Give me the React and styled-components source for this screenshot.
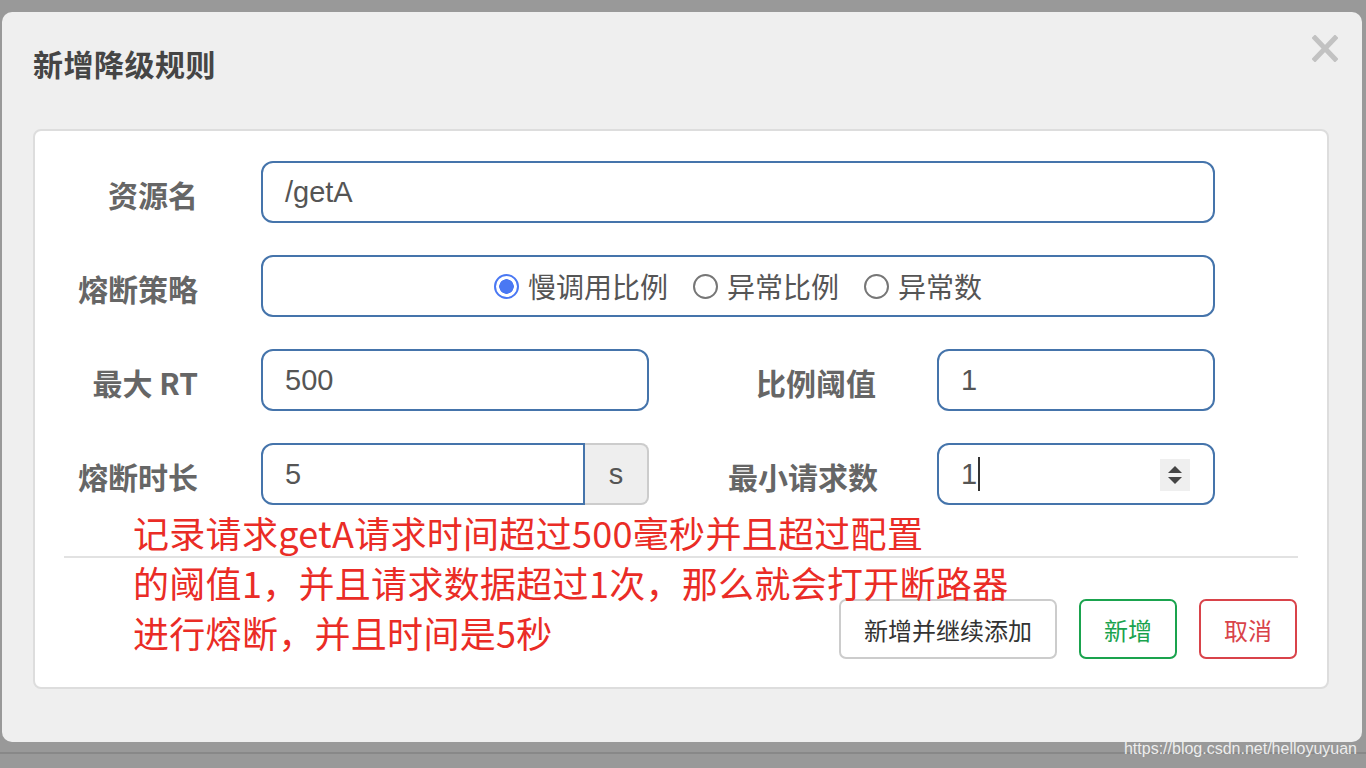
import React from "react";
import styled, { createGlobalStyle } from "styled-components";

const GlobalStyle = createGlobalStyle`
    html, body {
        margin: 0;
        padding: 0;
        background: #999999;
        font-family: "Liberation Sans", "Noto Sans CJK SC", sans-serif;
    }
`;

const CJK = `"Noto Sans CJK SC", "Liberation Sans", sans-serif`;
const LATIN = `"Liberation Sans", "Noto Sans CJK SC", sans-serif`;

function Radio({ checked, children }) {
    return (
        <Option>
            <RadioDot $checked={checked} />
            <span>{children}</span>
        </Option>
    );
}

function Spinner() {
    return (
        <SpinBox>
            <svg width="18" height="22" viewBox="0 0 18 22">
                <path d="M9 2 L16 9 L2 9 Z" fill="#444" />
                <path d="M2 13 L16 13 L9 20 Z" fill="#444" />
            </svg>
        </SpinBox>
    );
}

export default function App() {
    return (
        <Page>
            <GlobalStyle />
            <Modal>
                <Header>
                    <Title>新增降级规则</Title>
                    <Close aria-label="close">
                        <svg width="26" height="27" viewBox="0 0 26 27">
                            <path
                                d="M3 3 L23 24 M23 3 L3 24"
                                stroke="#c2c2c2"
                                strokeWidth="5"
                                strokeLinecap="square"
                            />
                        </svg>
                    </Close>
                </Header>

                <Panel>
                    <Form>
                        <Row>
                            <Label>资源名</Label>
                            <Field>/getA</Field>
                        </Row>
                        <Row>
                            <Label>熔断策略</Label>
                            <Field $center>
                                <Radio checked>慢调用比例</Radio>
                                <Radio>异常比例</Radio>
                                <Radio>异常数</Radio>
                            </Field>
                        </Row>
                        <Row>
                            <Label>最大 RT</Label>
                            <Field $width={388}>500</Field>
                            <Label $width={227} $gap={61}>比例阈值</Label>
                            <Field $width={278}>1</Field>
                        </Row>
                        <Row>
                            <Label>熔断时长</Label>
                            <Group>
                                <Field $width={324} $flatRight>5</Field>
                                <Addon>s</Addon>
                            </Group>
                            <Label $width={229} $gap={59}>最小请求数</Label>
                            <Field $width={278}>
                                1<Caret />
                                <Spinner />
                            </Field>
                        </Row>
                    </Form>

                    <Divider />

                    <Footer>
                        <Button $width={218}>新增并继续添加</Button>
                        <Button $width={98} $variant="success">新增</Button>
                        <Button $width={98} $variant="danger">取消</Button>
                    </Footer>

                    {/* annotation drawn on top of the dialog */}
                    <Note>
                        记录请求getA请求时间超过500毫秒并且超过配置
                        <br />
                        的阈值1，并且请求数据超过1次，那么就会打开断路器
                        <br />
                        进行熔断，并且时间是5秒
                    </Note>
                </Panel>
            </Modal>
            <Watermark>https://blog.csdn.net/helloyuyuan</Watermark>
        </Page>
    );
}

const Page = styled.div`
    position: relative;
    width: 1366px;
    height: 768px;
    padding: 12px 4px 0 2px;
    box-sizing: border-box;
    overflow: hidden;
    background: linear-gradient(
        to bottom,
        transparent 752px,
        #888888 752px,
        #888888 754px,
        transparent 754px
    );
`;

const Modal = styled.div`
    width: 1360px;
    height: 730px;
    box-sizing: border-box;
    background: #efefef;
    border-radius: 10px;
    padding: 0 33px 53px 31px;
    display: flex;
    flex-direction: column;
`;

const Header = styled.div`
    display: flex;
    justify-content: space-between;
    align-items: flex-start;
    height: 117px;
    padding-top: 30px;
    box-sizing: border-box;
`;

const Title = styled.h4`
    margin: 0;
    font-family: ${CJK};
    font-size: 30px;
    line-height: 42px;
    font-weight: bold;
    letter-spacing: 0.5px;
    color: #454545;
`;

const Close = styled.div`
    margin-top: -7px;
    margin-right: -9px;
    width: 26px;
    height: 27px;
    display: flex;
`;

const Panel = styled.div`
    position: relative;
    flex: 1;
    background: #ffffff;
    border: 2px solid #dddddd;
    border-radius: 8px;
    padding: 30px 0 28px 0;
    display: flex;
    flex-direction: column;
`;

const Form = styled.div`
    display: flex;
    flex-direction: column;
    gap: 32px;
    padding-right: 112px;
`;

const Row = styled.div`
    display: flex;
    align-items: center;
    height: 62px;
`;

const Label = styled.label`
    width: ${(p) => p.$width || 163}px;
    margin-right: ${(p) => p.$gap || 63}px;
    flex-shrink: 0;
    text-align: right;
    font-family: ${CJK};
    font-size: 30px;
    font-weight: bold;
    color: #666666;
    padding-top: 4px;
`;

const Field = styled.div`
    position: relative;
    ${(p) => (p.$width ? `width: ${p.$width}px; flex-shrink: 0;` : "flex: 1;")}
    height: 62px;
    box-sizing: border-box;
    border: 2px solid #4574ab;
    border-radius: ${(p) => (p.$flatRight ? "12px 0 0 12px" : "12px")};
    padding: 0 22px;
    display: flex;
    align-items: center;
    justify-content: ${(p) => (p.$center ? "center" : "flex-start")};
    gap: ${(p) => (p.$center ? "25px" : "0")};
    font-family: ${LATIN};
    font-size: 29px;
    color: #555555;
    background: #ffffff;
`;

const Group = styled.div`
    display: flex;
`;

const Addon = styled.div`
    width: 64px;
    height: 62px;
    box-sizing: border-box;
    background: #eeeeee;
    border: 2px solid #cccccc;
    border-left: none;
    border-radius: 0 8px 8px 0;
    display: flex;
    align-items: center;
    justify-content: center;
    font-family: ${LATIN};
    font-size: 29px;
    color: #555555;
`;

const Option = styled.label`
    display: flex;
    align-items: center;
    gap: 9px;
    font-family: ${CJK};
    font-size: 28px;
    color: #555555;
`;

const RadioDot = styled.span`
    width: 25px;
    height: 25px;
    box-sizing: border-box;
    border-radius: 50%;
    border: ${(p) => (p.$checked ? "2px solid #4a78f3" : "2px solid #767676")};
    background: ${(p) =>
        p.$checked
            ? "radial-gradient(circle, #4a78f3 0 7px, #ffffff 7.5px)"
            : "#ffffff"};
`;

const Caret = styled.span`
    width: 2px;
    height: 34px;
    margin-left: 1px;
    background: #333333;
`;

const SpinBox = styled.div`
    position: absolute;
    right: 23px;
    top: 14px;
    width: 30px;
    height: 32px;
    background: #efefef;
    display: flex;
    align-items: center;
    justify-content: center;
`;

const Divider = styled.div`
    height: 2px;
    background: #e2e2e2;
    margin: 51px 29px 0;
`;

const Footer = styled.div`
    display: flex;
    justify-content: flex-end;
    gap: 22px;
    margin-top: 41px;
    padding-right: 30px;
`;

const variants = {
    default: { color: "#333333", border: "#cccccc" },
    success: { color: "#1aa34e", border: "#1aa34e" },
    danger: { color: "#d9434a", border: "#d9434a" },
};

const Button = styled.button`
    width: ${(p) => p.$width}px;
    height: 60px;
    padding: 0;
    box-sizing: border-box;
    background: #ffffff;
    border: 2px solid ${(p) => variants[p.$variant || "default"].border};
    color: ${(p) => variants[p.$variant || "default"].color};
    border-radius: 7px;
    font-family: ${CJK};
    font-size: 24px;
    cursor: pointer;
`;

const Note = styled.div`
    position: absolute;
    left: 98px;
    top: 376px;
    font-family: ${CJK};
    font-size: 36px;
    line-height: 50px;
    letter-spacing: 0.3px;
    color: #ea2c26;
    white-space: nowrap;
    pointer-events: none;
`;

const Watermark = styled.div`
    position: absolute;
    right: 9px;
    bottom: 10px;
    font-family: ${LATIN};
    font-size: 16px;
    color: rgba(255, 255, 255, 0.85);
`;
